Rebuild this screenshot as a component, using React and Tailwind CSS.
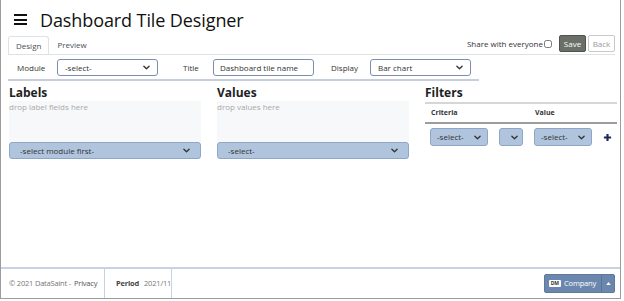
import { useState } from 'react';

const Chevron = () => (
    <svg width="7" height="7" viewBox="0 0 16 16" className="shrink-0">
        <path d="M2 5l6 6 6-6" fill="none" stroke="#333" strokeWidth="3" strokeLinecap="round" strokeLinejoin="round" />
    </svg>
);

function Select({ value, className = '', blue = false }) {
    return (
        <div
            className={`flex items-center justify-between rounded-[3px] border text-[8px] whitespace-nowrap ${
                blue ? 'bg-[#b0c4de] border-[#8fa6c6] text-[#333]' : 'bg-white border-[#7d8db0] text-[#333]'
            } ${className}`}
        >
            <span>{value}</span>
            <Chevron />
        </div>
    );
}

export default function App() {
    const [share, setShare] = useState(false);

    return (
        <div
            className="w-[621px] h-[299px] flex flex-col border-l border-r border-b border-[#9c9c9c] bg-white text-[#212529]"
            style={{ fontFamily: '"Open Sans", "Noto Sans", sans-serif' }}
        >
            <main className="flex-1 pl-[7px] pr-[5px]">
                {/* header */}
                <div className="flex items-center h-[27px] mt-[6px]">
                    <div className="ml-[6px] w-[13px] flex flex-col gap-[2.5px]">
                        <span className="block h-[2px] bg-[#111]" />
                        <span className="block h-[2px] bg-[#111]" />
                        <span className="block h-[2px] bg-[#111]" />
                    </div>
                    <h1 className="ml-[13px] text-[18px] leading-none text-[#111] tracking-[-0.1px]">Dashboard Tile Designer</h1>
                </div>

                {/* tabs */}
                <div className="mt-[2px] flex items-end justify-between border-b border-[#dee2e6]">
                    <div className="flex text-[8px]">
                        <div className="px-[7px] h-[18px] flex items-center border border-b-0 border-[#dee2e6] rounded-t-[3px] text-[#495057] bg-white -mb-px">
                            Design
                        </div>
                        <div className="px-[8px] h-[18px] flex items-center text-[#495057]">Preview</div>
                    </div>
                    <div className="flex items-center mb-[2px] text-[8px]">
                        <span className="text-[#333]">Share with everyone</span>
                        <input
                            type="checkbox"
                            checked={share}
                            onChange={() => setShare(!share)}
                            className="ml-[1px] w-[8px] h-[8px] m-0"
                        />
                        <button className="ml-[7px] h-[17px] w-[27px] rounded-[2px] bg-[#6a7067] border border-[#4f544c] text-white">
                            Save
                        </button>
                        <button className="ml-[2px] h-[17px] w-[27px] rounded-[2px] bg-white border border-[#c9c9c9] text-[#9a9a9a]">
                            Back
                        </button>
                    </div>
                </div>

                {/* form row */}
                <div className="w-[471px] mt-[4px] pb-[3px] border-b-2 border-[#c6cddf] flex items-center text-[8px] text-[#333]">
                    <span className="ml-[9px] w-[40px]">Module</span>
                    <Select value="-select-" className="w-[101px] h-[17px] px-[7px]" />
                    <span className="ml-[25px] w-[30px]">Title</span>
                    <div className="w-[101px] h-[17px] rounded-[3px] border border-[#7d8db0] px-[6px] flex items-center text-[#333]">
                        Dashboard tile name
                    </div>
                    <span className="ml-[17px] w-[39px]">Display</span>
                    <Select value="Bar chart" className="w-[101px] h-[17px] px-[7px]" />
                </div>

                {/* columns */}
                <div className="mt-[4px] grid grid-cols-[192px_192px_192px] gap-x-[16px] pl-[1px]">
                    <div>
                        <h2 className="text-[12px] font-bold leading-[16px] text-[#222]">Labels</h2>
                        <div className="h-[41px] bg-[#f7f8fa] text-[8px] text-[#a9a9a9] leading-[12px]">drop label fields here</div>
                        <Select value="-select module first-" blue className="h-[17px] px-[10px]" />
                    </div>
                    <div>
                        <h2 className="text-[12px] font-bold leading-[16px] text-[#222]">Values</h2>
                        <div className="h-[41px] bg-[#f7f8fa] text-[8px] text-[#a9a9a9] leading-[12px]">drop values here</div>
                        <Select value="-select-" blue className="h-[17px] px-[10px]" />
                    </div>
                    <div>
                        <h2 className="text-[12px] font-bold leading-[16px] text-[#222] pb-[1px] border-b-2 border-[#d6d6d6]">Filters</h2>
                        <div className="flex h-[20px] items-center text-[7px] font-bold text-[#333] border-b-2 border-[#9d9d9d]">
                            <span className="ml-[6px] w-[104px]">Criteria</span>
                            <span>Value</span>
                        </div>
                        <div className="flex items-center mt-[4px]">
                            <Select value="-select-" blue className="ml-[5px] w-[58px] h-[18px] px-[6px]" />
                            <Select value="" blue className="ml-[11px] w-[24px] h-[18px] justify-end px-[4px]" />
                            <Select value="-select-" blue className="ml-[11px] w-[58px] h-[18px] px-[6px]" />
                            <svg width="9" height="9" viewBox="0 0 10 10" className="ml-[11px]">
                                <path d="M5 1v8M1 5h8" stroke="#1c2b57" strokeWidth="2.4" />
                            </svg>
                        </div>
                    </div>
                </div>
            </main>

            {/* footer */}
            <footer className="h-[31px] border-t-2 border-[#c8d2e4] flex items-stretch text-[7.5px] whitespace-nowrap tracking-[-0.2px]">
                <div className="w-[104px] flex items-center pl-[8px] text-[#777] border-r border-[#c8d2e4]">
                    © 2021 DataSaint -<span className="ml-[3px] text-[#555]">Privacy</span>
                </div>
                <div className="w-[67px] flex items-center pl-[11px] border-r border-[#c8d2e4]">
                    <span className="font-bold text-[#444]">Period</span>
                    <span className="ml-[5px] text-[#777]">2021/11</span>
                </div>
                <div className="flex-1 flex items-center justify-end pr-[5px]">
                    <div className="flex h-[19px] rounded-[2px] bg-[#6c87ae] text-white border border-[#5e789f]">
                        <div className="flex items-center pl-[4px] pr-[5px] gap-[3px]">
                            <span className="bg-white text-[#333] text-[5px] font-bold px-[2px] leading-[7px] rounded-[1px] tracking-normal">DM</span>
                            <span>Company</span>
                        </div>
                        <div className="w-[13px] flex items-center justify-center border-l border-[#5a7398]">
                            <svg width="5" height="3" viewBox="0 0 6 4">
                                <path d="M0 4L3 0L6 4Z" fill="white" />
                            </svg>
                        </div>
                    </div>
                </div>
            </footer>
        </div>
    );
}
